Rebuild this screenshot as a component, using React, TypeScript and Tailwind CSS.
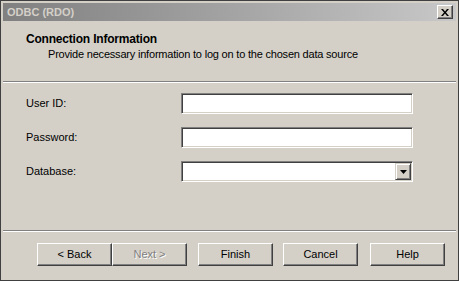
import React from "react";

const font = { fontFamily: '"Liberation Sans", Arial, sans-serif' };

function Btn({ label, disabled }: { label: string; disabled?: boolean }) {
  return (
    <div className="w-[75px] h-[23px] border border-t-white border-l-white border-b-[#404040] border-r-[#404040] shadow-[inset_-1px_-1px_0_#808080] flex items-center justify-center text-[11px] leading-none">
      <span className={disabled ? "text-[#808080] [text-shadow:1px_1px_0_#ffffff]" : "text-black"}>{label}</span>
    </div>
  );
}

function Field({ dropdown }: { dropdown?: boolean }) {
  return (
    <div className="w-[232px] h-[21px] bg-white border border-t-[#808080] border-l-[#808080] border-b-white border-r-white shadow-[inset_1px_1px_0_#404040,inset_-1px_-1px_0_#d4d0c8] flex justify-end p-[1px]">
      {dropdown && (
        <div className="w-[16px] h-[17px] bg-[#d4d0c8] border border-t-[#d4d0c8] border-l-[#d4d0c8] border-b-[#404040] border-r-[#404040] shadow-[inset_1px_1px_0_#ffffff,inset_-1px_-1px_0_#808080] flex items-center justify-center">
          <svg width="7" height="4" viewBox="0 0 7 4">
            <path d="M0 0h7L3.5 4z" fill="#000" />
          </svg>
        </div>
      )}
    </div>
  );
}

export default function App() {
  const rows = [
    { label: "User ID:" },
    { label: "Password:" },
    { label: "Database:", dropdown: true },
  ];
  return (
    <div style={font} className="w-[459px] h-[281px] bg-[#d4d0c8] border border-[#404040] p-[2px] flex flex-col text-black">
      <div className="h-[18px] flex items-center justify-between pl-[4px] pr-[3px] bg-gradient-to-r from-[#808080] to-[#c8c8c8]">
        <span className="text-[11px] font-bold text-[#d4d0c8] leading-none">ODBC (RDO)</span>
        <div className="w-[16px] h-[14px] bg-[#d4d0c8] border border-t-white border-l-white border-b-[#404040] border-r-[#404040] shadow-[inset_-1px_-1px_0_#808080] flex items-center justify-center">
          <svg width="8" height="7" viewBox="0 0 8 7">
            <path d="M0 0h2l2 2.5L6 0h2L5 3.5 8 7H6L4 4.5 2 7H0l3-3.5z" fill="#000" />
          </svg>
        </div>
      </div>
      <div className="h-[60px] flex flex-col pt-[11px]">
        <div className="pl-[23px] text-[12px] leading-[15px] font-bold tracking-[-0.2px]">Connection Information</div>
        <div className="pl-[45px] mt-[1px] text-[11px] leading-[13px] tracking-[-0.2px]">Provide necessary information to log on to the chosen data source</div>
      </div>
      <div className="h-[1px] bg-[#808080]" />
      <div className="h-[1px] bg-white" />
      <div className="flex-1 flex flex-col gap-[13px] pt-[10px] pl-[23px]">
        {rows.map((r) => (
          <div key={r.label} className="flex items-center h-[21px]">
            <div className="w-[155px] text-[11px]">{r.label}</div>
            <Field dropdown={r.dropdown} />
          </div>
        ))}
      </div>
      <div className="h-[1px] bg-[#808080]" />
      <div className="h-[1px] bg-white" />
      <div className="flex pt-[11px] pb-[12px] pl-[34px]">
        <Btn label="< Back" />
        <Btn label="Next >" disabled />
        <div className="ml-[11px]">
          <Btn label="Finish" />
        </div>
        <div className="ml-[10px]">
          <Btn label="Cancel" />
        </div>
        <div className="ml-[12px]">
          <Btn label="Help" />
        </div>
      </div>
    </div>
  );
}
